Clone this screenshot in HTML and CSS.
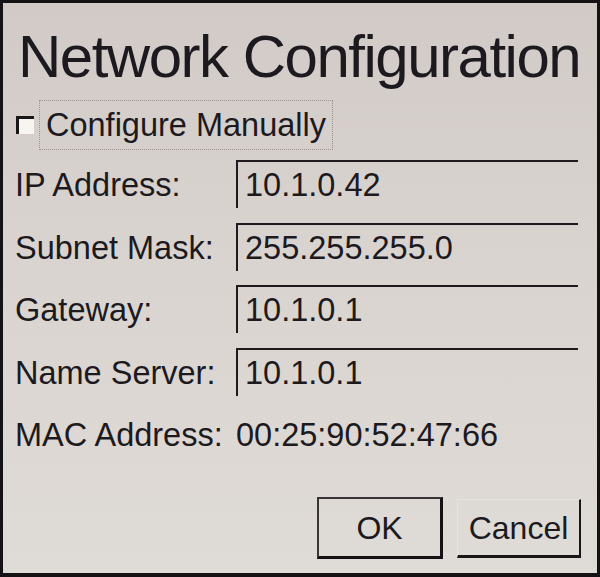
FILE: index.html
```html
<!DOCTYPE html>
<html>
<head>
    <meta charset="UTF-8">
    <title>Network Configuration</title>
    <link rel="stylesheet" href="styles.css">
</head>
<body>
    <div class="window">
        <h1 class="title">Network Configuration</h1>
        <div class="manual">
            <span class="check"></span>
            <span class="manual-text">Configure Manually</span>
        </div>
        <div class="form">
            <span class="label">IP Address:</span>
            <div class="field">10.1.0.42</div>
            <span class="label">Subnet Mask:</span>
            <div class="field">255.255.255.0</div>
            <span class="label">Gateway:</span>
            <div class="field">10.1.0.1</div>
            <span class="label">Name Server:</span>
            <div class="field">10.1.0.1</div>
            <span class="label">MAC Address:</span>
            <span class="value">00:25:90:52:47:66</span>
        </div>
        <div class="buttons">
            <button class="btn btn-default">OK</button>
            <button class="btn">Cancel</button>
        </div>
    </div>
</body>
</html>
```

FILE: styles.css
```css
body, div, h1, span, button {
    margin: 0;
    padding: 0;
}
body {
    background-color: #111111;
    font-family: "Liberation Sans", Arial, sans-serif;
    color: #1c1a1e;
}
.window {
    box-sizing: border-box;
    width: 600px;
    height: 577px;
    border-style: solid;
    border-color: #141214;
    border-width: 3px 3px 4px 3px;
    background: linear-gradient(to bottom, #d1cac7 0%, #d9d3cf 40%, #dfdbd6 100%);
    padding: 24px 19px 14px 12px;
    display: flex;
    flex-direction: column;
}
.title {
    font-weight: normal;
    font-size: 60px;
    line-height: 60px;
    letter-spacing: -1.5px;
    padding-left: 3px;
    white-space: nowrap;
}
.manual {
    display: flex;
    align-items: center;
    margin-top: 13px;
}
.check {
    box-sizing: border-box;
    width: 18px;
    height: 18px;
    margin-left: 1px;
    background-color: #f7f5f2;
    border-top: 3px solid #1a1618;
    border-left: 3px solid #1a1618;
}
.manual-text {
    box-sizing: border-box;
    height: 50px;
    margin-left: 5px;
    padding: 0 6px;
    border: 1px dotted #9a9290;
    font-size: 32.5px;
    line-height: 48px;
    white-space: nowrap;
}
.form {
    display: grid;
    grid-template-columns: 221px 1fr;
    grid-auto-rows: 48px;
    row-gap: 14.5px;
    margin-top: 10px;
    font-size: 32.5px;
    white-space: nowrap;
}
.label, .value {
    line-height: 48px;
    padding-top: 1px;
}
.field {
    box-sizing: border-box;
    border-top: 2px solid #201a1e;
    border-left: 2px solid #201a1e;
    padding-left: 7px;
    line-height: 46px;
}
.buttons {
    margin-top: auto;
    display: flex;
    justify-content: flex-end;
    align-items: center;
    gap: 14px;
    margin-right: -3px;
}
.btn {
    box-sizing: border-box;
    font-family: "Liberation Sans", Arial, sans-serif;
    font-size: 32px;
    color: #1c1a1e;
    background: transparent;
    height: 59px;
    width: 124px;
    border-style: solid;
    border-color: #e6e2de #1a1618 #1a1618 #e6e2de;
    border-width: 1px 2px 3px 1px;
    padding-top: 2px;
}
.btn-default {
    height: 62px;
    width: 126px;
    border-color: #3a3436 #141214 #141214 #3a3436;
    border-width: 2px 3px 3px 2px;
}
```
